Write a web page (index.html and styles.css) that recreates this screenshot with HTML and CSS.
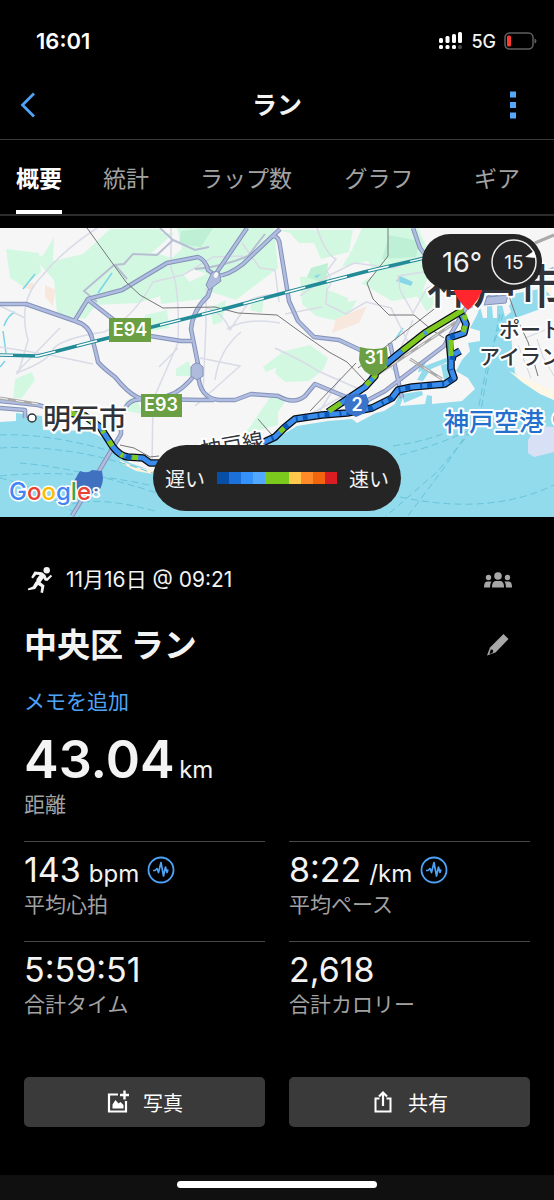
FILE: index.html
```html
<!DOCTYPE html>
<html lang="ja">
<head>
<meta charset="utf-8">
<meta name="viewport" content="width=device-width, initial-scale=1">
<title>ラン</title>
<link rel="stylesheet" href="styles.css">
</head>
<body>
<div class="app">
  <div class="status">
    <span class="clock">16:01</span>
    <div class="status-right">
      <svg class="signal" viewBox="0 0 24 20" aria-hidden="true">
        <g fill="#fff"><rect x="0" y="7" width="4" height="5" rx="1.500"/><rect x="6.500" y="5" width="4" height="7" rx="1.500"/><rect x="13" y="3" width="4" height="9" rx="1.500"/><rect x="19" y="1" width="4" height="11" rx="1.500"/><rect x="0" y="14" width="4" height="4" rx="1.500"/><rect x="6.500" y="14" width="4" height="4" rx="1.500"/><rect x="13" y="14" width="4" height="4" rx="1.500"/></g>
        <rect x="19" y="14" width="4" height="4" rx="1.500" fill="#444"/>
      </svg>
      <span class="network">5G</span>
      <svg class="battery" viewBox="0 0 33 18" aria-hidden="true">
        <rect x="1" y="1" width="28" height="16" rx="4.500" fill="none" stroke="#5d605f" stroke-width="1.500"/>
        <rect x="3" y="3.500" width="4" height="11" rx="1.500" fill="#ff3b30"/>
        <path d="M30.500 6.500q2 .5 2 2.500t-2 2.500z" fill="#5d605f"/>
      </svg>
    </div>
  </div>

  <header class="nav">
    <button class="nav-button" aria-label="戻る"><svg class="back" viewBox="0 0 16 26" aria-hidden="true"><path d="M14 1.500L2.500 13 14 24.500" fill="none" stroke="#4fa3f7" stroke-width="2.800"/></svg></button>
    <h1>ラン</h1>
    <button class="nav-button nav-more" aria-label="メニュー"><svg class="more" viewBox="0 0 6 28" aria-hidden="true"><path d="M0 .5h6v6H0zM0 11h6v6H0zM0 21.500h6v6H0z" fill="#57a8f8"/></svg></button>
  </header>

  <nav class="tabs">
    <a class="tab tab-active" href="#summary" aria-current="page">概要</a>
    <a class="tab" href="#stats">統計</a>
    <a class="tab" href="#laps">ラップ数</a>
    <a class="tab" href="#graph">グラフ</a>
    <a class="tab" href="#gear">ギア</a>
  </nav>

  <section class="map" aria-label="地図">
    <svg class="map-canvas" viewBox="0 0 554 289">
      <rect width="554" height="289" fill="#f6f6f7"/>
      <g fill="#d3f8e2">
        <path d="M6 21l33 4 2 19-17 15-14-9zM44 26l10-17-1 24 30-7 27-25h54l-15 22 23 7 15-14 20-9v17l-24 22 10 12-55 17-42 2-11 14-28-5-3-34-18-20zM115 25l33-22 26 2-20 18-15 9zM160 67l60-27-10 30-49 6zM177 0h97l4 40-42 32-28-9 12-13-25-8-28 6 17-19zM210 80l16-8-4 22-9 3zM252 72l12-3-2 16-12-3zM145 87l22-5 2 18-27 4zM176 141l12-8 7 15h-19zM263 139l17-13v12l-14 6zM15 151l17-7 3 8-13 18h-9zM125 173l12-5 5 18-16-3zM245 206l26-38 7-3v32z"/>
        <path d="M277 2h76l-4 22-28 7-7-16-15 0-9-10zM362 0h56l15 34-12 34-29 5-31-18 14-9-7-13-26 6 10-17zM300 49l28-1v14l20 8-1 25-31-7-14-12zM281 124l29-7 18 13-5 12-14 11-24 1-10-9zM330 78l27-6-8 14-15 2zM417 68l17-13 5 15-12 14zM373 54l29-7-22 20zM275 168l12 3-12 18z"/>
      </g>
      <g fill="#bdf0d4"><path d="M181 3l32-3-12 19-22-3zM311 40l17-5-2 21-19-7zM389 7l30 6-3 16-34 2z"/></g>
      <g fill="#f7e7dc"><path d="M45 57l10 5-2 16-8-9zM336 91l31-13-8 17-27 10zM22 59l11-5v8z"/></g>
      <!-- Sea, harbour basins and reclaimed islands -->
      <path d="M0 194L16 193V185L42 188 43 202 90 203 103 210 115 225 130 235 153 243 230 236 258 226 275 211 297 198 328 193 352 191 357 195 376 185 384 183 395 176 398 168 403 170 400 178 425 176 427 167 432 168 432 176 462 173 475 161 468 150 456 143 462 132 470 123 468 115 480 113 480 103 470 100 477 87 480 79 510 77 513 66 545 60 554 62V289H0z" fill="#92dbec"/>
      <g fill="#f6f6f7">
        <path d="M510 92L554 76V172L540 165 515 145 512 118zM480 79l3 11 4 0 0-12 5 0 1 12 4 0 0-14 5 0 3 13 6-5-3-10zM541 74l13-4v20l-12 3z"/>
      </g>
      <g fill="#92dbec"><path d="M417 152l8-14 21-8 4 3-19 8-8 12zM421 133l5 0-3 10-5 1zM404 175l-2-9 20-3 1 4zM436 160l7-2 1 3zM441 137l8-2 1 14-6 3z"/></g>
      <path d="M509 143l13 6 32 14v9l-14-6-18-12zM544 60l10-4v16z" fill="#fff7e5"/>
      <path d="M120 232l15 7 18 3v4l-17-3-15-8z" fill="#fff2df"/>
      <path d="M525 110l20-8M518 117l13 33M537 111l6 18 11 19" fill="none" stroke="#d3d5da"/>
      <path d="M554 199l-17-1-9 14v13l6 4 20-5z" fill="#d8e0f5"/>
      <path d="M23 61l12-15M4 98q4-11 11-14M3 103l3 22M0 139l5-6M98 65l14-20M395 112l8-12" fill="none" stroke="#79d4e8" stroke-width="1.500"/>
      <path d="M314 48l7-2-4 4zM400 48l13 6-2 4-15-5z" fill="#87d6e9"/>

      <!-- Ferry lines -->
      <g fill="none" stroke="#69c3da" stroke-width="1" stroke-dasharray="7 4">
        <path d="M0 207q60-3 155 30M0 220q75-4 155 26M0 248q75-8 153 10M20 235q60 5 140 31M72 276q30-8 86 8M0 250q40 9 80 39"/>
        <path d="M500 86l-12 56-9 52-42 50-52 45M503 86l-17 56-10 50-32 48-37 49M393 218q35-5 59-16M400 227q35-9 68-24M400 269q90 19 154-12"/>
      </g>

      <!-- Minor roads -->
      <g fill="none" stroke="#d9dbe6" stroke-width="1.500">
        <path d="M97 0q-35 23-55 48-25 25-14 64-10 36-11 34M25 90L0 78M16 145q34-12 38-25 10-10 50-16 28-12 49-50l30-7 30-18 30-1M171 0v40q9 20 7 75l-25 57-1 65M0 119l50 8 43 9M206 80q16 3 24 22l20-30q20-8 30-4M227 101q20-12 53-6M206 60v35l-3 70M215 152q4-30 26-48M200 130l40 8-45 40M178 120l-19 19M60 100l-44 45"/>
        <path d="M242 15l18 25 15 2 4 32M317 0q9 27 19 31l-9 12q7 13 0 18l-1 15 20 10 20-12 25 6 19 38-6 11M300 68l28-20 26-13 40 5 34-14M285 86l37-7M400 62l13 23 14-25 40-14M400 62l-2-14 32-5M275 120q28 13 43 23l41 18M413 92l-12 28M340 150l-20 33M300 192l41-23 7 9M383 130l20 23"/>
      </g>
      <g fill="none" stroke="#b9bfd3" stroke-width="2"><path d="M160 0l13 12-16 15-24-1-9 10-10 1-30 26 13 11M173 12l22 10 14-3M195 41q27-2 53-13l17-22M115 37l12 14"/></g>

      <!-- Main roads: edge stroke under a lighter centre -->
      <g fill="none" stroke-linejoin="round">
        <path stroke="#8392b9" stroke-width="4.500" d="M0 76h26l49 17q14 4 17 17 4 14 6 24 5 6 17 15 12 15 22 20 8 4 17 2l46 1h14M75 92l13-21 34-9 45-27 31-6q8 3 10 13l8 6q12 0 27-12l37-35M87 71l27 21 30 15 37 6h11M273 8q6 0 7 10l9 55 9 20 16 16 25 3 34 16 18 9M247 0l-32 47-7 21q-15 14-17 33l7 35-1 8q-15 20-30 24l-32 4q-15 4-14 34l-22 37-27 45M198 145q1 25 21 27h16l16-6 27 2q16 9 27 0l10-12 31 13 10 8M0 173l38 4 37 10M0 180l25 2 0 8M413 0l7 20 13 17M353 180l32-17 9-7 50-38 22-38 30-14 58-25M369 155l12-28M390 115l12 55"/>
        <path stroke="#b1bde0" stroke-width="2.500" d="M0 76h26l49 17q14 4 17 17 4 14 6 24 5 6 17 15 12 15 22 20 8 4 17 2l46 1h14M75 92l13-21 34-9 45-27 31-6q8 3 10 13l8 6q12 0 27-12l37-35M87 71l27 21 30 15 37 6h11M273 8q6 0 7 10l9 55 9 20 16 16 25 3 34 16 18 9M247 0l-32 47-7 21q-15 14-17 33l7 35-1 8q-15 20-30 24l-32 4q-15 4-14 34l-22 37-27 45M198 145q1 25 21 27h16l16-6 27 2q16 9 27 0l10-12 31 13 10 8M0 173l38 4 37 10M0 180l25 2 0 8M413 0l7 20 13 17M353 180l32-17 9-7 50-38 22-38 30-14 58-25M369 155l12-28M390 115l12 55"/>
      </g>
      <path d="M191 139q5-8 12 0l0 9-6 4-6-4zM212 44l7 0 2 9-12 9-3-5z" fill="#aebbdc" stroke="#8392b9"/>
      <ellipse cx="216" cy="47" rx="2" ry="3" fill="#f6f6f7" transform="rotate(20 216 47)"/>
      <path d="M487 69l21-2-2 8-22 2z" fill="#b1bde0" stroke="#8392b9"/>

      <!-- Railways -->
      <g fill="none" stroke="#777" stroke-width="1"><path d="M87 0l39 54 14 13 23 13 52-1 23 6 39 2 29 21 23 16 18 10 18 19M388 0v28l-21 27 6 16 16 16h25l18 15 12 8M120 217l14 3 16 9 9-1M258 191l14 16M508 65l9 26 11 23 10 34M310 183l46-48M358 140l80-62"/></g>
      <g fill="none" stroke="#aaa" stroke-width="3"><path d="M378 146l78-52M410 131l32 20M535 15l19-8M0 170l38 6"/></g>
      <g fill="none" stroke="#eee" stroke-width="1" stroke-dasharray="8 8"><path d="M378 146l78-52M410 131l32 20M0 170l38 6"/></g>
      <path d="M0 127l38 1 66-17 116-29 56-15 88-23 78-18" fill="none" stroke="#218b98" stroke-width="3.500"/>
      <path d="M0 127l38 1 66-17 116-29 56-15 88-23 78-18" fill="none" stroke="#fff" stroke-width="1.500" stroke-dasharray="21 22" stroke-dashoffset="8"/>

      <!-- Highway shields -->
      <g class="shield-text">
        <rect x="109" y="90" width="42" height="24" fill="#6aa043"/><text x="130" y="108">E94</text>
        <rect x="141" y="166" width="41" height="23" fill="#6aa043"/><text x="161" y="183">E93</text>
      </g>
      <path d="M80 243q8 3 12-1l10 1 1 7q-1 16-14 18-12-1-15-15z" fill="#4070c0"/>

      <!-- Route with pace colours -->
      <g fill="none" stroke-linejoin="round">
        <g stroke="#080b10" stroke-width="7.500">
          <path d="M70 185l15 3 15 11 13 20q7 9 15 10l15 1 7 5h24M258 217l17-8 9-9 11-9 27-4 25-2 25-5 20-10 6-8 14-3 33-3 9-6-3-9v-9l-2-22 15-5 2-9-4-9M452 132l1-5 7-4M463 82l-38 23-23 18-27 22 0 3-10 11-37 25"/>
        </g>
        <g stroke="#398ceb" stroke-width="5">
          <path d="M70 185l15 3 15 11 13 20q7 9 15 10l15 1 7 5h24M258 217l17-8 9-9 11-9 27-4 25-2 25-5 20-10 6-8 14-3 33-3 9-6-3-9v-9l-2-22 15-5 2-9-4-9M452 132l1-5 7-4M402 123l-27 22 0 3-10 11-37 25"/>
        </g>
        <path d="M258 217l17-8M284 200l11-9 27-4 25-2 25-5 20-10 6-8 14-3 33-3 9-6-3-9M450 109l11-3M452 132l1-5 7-4" stroke="#0c58b6" stroke-width="5" stroke-dasharray="5 10 2 5"/>
        <path d="M463 82l-38 23-23 18M386 137l-11 8 0 3-2 2M370 153l-4 4M341 175l-12 8M280 204l4-4M70 185l15 3M451 112l0 16" stroke="#7ec820" stroke-width="5"/>
        <path d="M89 191l11 8 13 20q7 9 15 10l15 1" stroke="#7ec820" stroke-width="5" stroke-dasharray="6 12 3 9"/>
        <path d="M126 228l5 2" stroke="#0c58b6" stroke-width="5"/>
        <path d="M427 104l-3 2" stroke="#4d9ad6" stroke-width="5"/>
        <path d="M464 87l2 5M465 98l-2 6" stroke="#7ec820" stroke-width="5"/>
      </g>
      <path d="M360 119q14 4 27 0l1 13q-3 12-14 16-12-3-15-16z" fill="#6aa043"/>
      <path d="M347 166q7 2 9-1 4 3 10 1l3 8-4 11-9 4-10-5-2-9z" fill="#3974ca"/>

      <!-- Place names -->
      <g class="place">
        <text class="place-city" x="43" y="201">明石市</text>
        <text class="place-major" x="427" y="75">神戸市</text>
        <text class="place-area" x="499" y="109">ポート</text>
        <text class="place-area" x="479" y="136">アイランド</text>
        <text class="place-rail" transform="rotate(-10 202 228)" x="202" y="230">神戸線</text>
        <text class="place-airport" x="444" y="203">神戸空港</text>
      </g>
      <circle cx="32" cy="190" r="4" fill="#fff" stroke="#333" stroke-width="1.500"/>
      <circle cx="561" cy="191" r="9" fill="#9aa7c8" stroke="#fff" stroke-width="2"/>
      <path d="M452 57h32q-4 15-16 25-12-10-16-25z" fill="#ff272d"/>
      <text class="google" x="9" y="272"><tspan fill="#4285f4">G</tspan><tspan fill="#ea4335">o</tspan><tspan fill="#fbbc05">o</tspan><tspan fill="#4285f4">g</tspan><tspan fill="#34a853">l</tspan><tspan fill="#ea4335">e</tspan></text>
      <g class="shield-text"><text x="374" y="136">31</text><text x="357" y="183">2</text><text class="shield-small" x="96" y="270">8</text></g>
    </svg>

    <div class="weather">
      <span class="temp">16°</span>
      <span class="wind"><svg class="dial" viewBox="0 0 48 48" aria-hidden="true"><circle cx="24" cy="24" r="22" fill="none" stroke="#eee" stroke-width="1.500"/><path d="M44 13l-9 6 11 1z" fill="#fff"/></svg><span class="wind-value">15</span></span>
    </div>
    <div class="legend">
      <span>遅い</span>
      <span class="scale"><i class="c1"></i><i class="c2"></i><i class="c3"></i><i class="c4"></i><i class="c5"></i><i class="c5"></i><i class="c6"></i><i class="c7"></i><i class="c8"></i><i class="c9"></i></span>
      <span>速い</span>
    </div>
  </section>

  <main class="summary" id="summary">
    <div class="row row-date">
      <svg class="runner" viewBox="0 0 26 28" aria-hidden="true">
        <g fill="#f3f3f3"><circle cx="19.700" cy="4.300" r="3.200"/>
        <path d="M7.500 5.500L15 6.200l3.200 2.600 1.600 3.400 4-3.400 1.300 1.400-4.800 4.800-2.600-.5-1.200-2.200-3 4 4 3.200-1.500 7.500-2.500-.5.800-5.500-5.500-3.500.8-4.500 3-4-3.500-.3-3.200 3.800-1.700-1.200z"/>
        <path d="M8.600 15.500l2.800 3-3.200 4.400-7 1.400-.4-1.600 5-2.200z"/></g>
      </svg>
      <span class="date">11月16日 @ 09:21</span>
      <button class="icon-button" aria-label="公開設定"><svg class="people" viewBox="0 0 28 16" aria-hidden="true"><g fill="#a7a7a7"><circle cx="14" cy="4" r="3.800"/><circle cx="4.500" cy="5.500" r="2.700"/><circle cx="23.500" cy="5.500" r="2.700"/><path d="M8 15.500q0-6.500 3.500-6.500h5q3.500 0 3.500 6.500zM0 15.500q0-6 3-6h4.500q-1.500 2-1.500 6zM28 15.500q0-6-3-6h-4.500q1.500 2 1.500 6z"/></g></svg></button>
    </div>
    <div class="row row-title">
      <h2>中央区 ラン</h2>
      <button class="icon-button" aria-label="編集"><svg class="pencil" viewBox="0 0 22 22" aria-hidden="true"><path d="M16.500 0l5 5L8.500 18.500 0 21.500l3-8z" fill="#a7a7a7"/><path d="M3.700 15.500l2 .300.600 2-1.300 1.400-2.500.900z" fill="#000"/></svg></button>
    </div>
    <a class="memo" href="#memo">メモを追加</a>
    <div class="distance"><span class="distance-value">43.04</span> <span class="unit">km</span></div>
    <div class="label">距離</div>

    <div class="stats">
      <div class="stat">
        <div class="value">143 <span class="unit">bpm</span><svg class="pulse" viewBox="0 0 28 28" aria-hidden="true"><g fill="none" stroke="#4fa3f7"><circle cx="14" cy="14" r="12.500" stroke-width="1.800"/><path d="M6 14.500h2l2-2 1.500 4 2.500-10 2.500 13.500 2-9 1.500 5.500 1-3" stroke-width="1.700" stroke-linejoin="round"/></g></svg></div>
        <div class="label">平均心拍</div>
      </div>
      <div class="stat">
        <div class="value">8:22 <span class="unit">/km</span><svg class="pulse" viewBox="0 0 28 28" aria-hidden="true"><g fill="none" stroke="#4fa3f7"><circle cx="14" cy="14" r="12.500" stroke-width="1.800"/><path d="M6 14.500h2l2-2 1.500 4 2.500-10 2.500 13.500 2-9 1.500 5.500 1-3" stroke-width="1.700" stroke-linejoin="round"/></g></svg></div>
        <div class="label">平均ペース</div>
      </div>
      <div class="stat"><div class="value">5:59:51</div><div class="label">合計タイム</div></div>
      <div class="stat"><div class="value">2,618</div><div class="label">合計カロリー</div></div>
    </div>

    <div class="actions">
      <button class="action"><svg class="action-icon" viewBox="0 0 24 24" aria-hidden="true"><path d="M12 4.500H3v17h17V11" fill="none" stroke="#fff" stroke-width="2.200"/><path d="M18.500 .5v9M14 5h9" stroke="#fff" stroke-width="2.400"/><path d="M6.500 18.500v-4l3-4.500 3 3.500 2-1.500 3 3v3.500z" fill="#fff"/></svg>写真</button>
      <button class="action"><svg class="action-icon" viewBox="0 0 24 24" aria-hidden="true"><path d="M8.500 8.500H4.500v13h15v-13h-4" fill="none" stroke="#fff" stroke-width="2"/><path d="M12 16V3M8 6.500l4-4 4 4" fill="none" stroke="#fff" stroke-width="2.200"/></svg>共有</button>
    </div>
  </main>

  <footer class="home"><span class="home-indicator"></span></footer>
</div>
</body>
</html>
```
FILE: styles.css
```css
* { box-sizing: border-box; }

body {
  margin: 0;
  background: #000;
  color: #f3f3f3;
  font-family: Inter, "Noto Sans CJK JP", sans-serif;
}

button {
  border: 0;
  padding: 0;
  background: none;
  color: inherit;
  font: inherit;
}

a { text-decoration: none; }

svg { display: block; flex: none; }

.app {
  display: flex;
  flex-direction: column;
  min-height: 100vh;
}

.status {
  display: flex;
  align-items: center;
  justify-content: space-between;
  height: 82px;
  padding: 0 17px 0 36px;
}

.clock {
  color: #fff;
  font-size: 22px;
  font-weight: 600;
}

.status-right {
  display: flex;
  align-items: center;
  gap: 8px;
}

.signal { width: 24px; height: 20px; }
.network { font-size: 18px; font-weight: 500; }
.battery { width: 33px; height: 18px; }

.nav {
  display: grid;
  grid-template-columns: 1fr auto 1fr;
  align-items: center;
  height: 58px;
  padding: 0 38px 12px 20px;
  border-bottom: 1px solid #3a3a3a;
}

.nav-button { justify-self: start; }
.nav-more { justify-self: end; }

.nav h1 {
  margin: 0 0 0 18px;
  font-size: 25px;
  font-weight: 700;
  line-height: 36px;
}

.back { width: 16px; height: 26px; }
.more { width: 6px; height: 28px; }

.tabs {
  display: grid;
  grid-template-columns: 78fr 96fr 144fr 122fr 114fr;
  justify-items: center;
  height: 76px;
  border-bottom: 2px solid #2c2c2c;
}

.tab {
  display: flex;
  align-items: center;
  padding-top: 4px;
  border-bottom: 4px solid transparent;
  color: #a2a2a2;
  font-size: 23px;
  white-space: nowrap;
}

.tab-active {
  border-color: #fff;
  color: #fff;
  font-weight: 700;
}

.map {
  position: relative;
  margin-top: 12px;
  overflow: hidden;
}

.map-canvas { width: 100%; height: auto; }

.shield-text {
  fill: #fff;
  font-size: 18px;
  font-weight: 600;
  text-anchor: middle;
}

.shield-small { font-size: 15px; }

.place {
  fill: #30343a;
  stroke: #fff;
  stroke-width: 4px;
  stroke-linejoin: round;
  paint-order: stroke;
}

.place-city { font-size: 28px; font-weight: 500; }
.place-major { font-size: 46px; font-weight: 500; }
.place-area { font-size: 21px; font-weight: 500; }
.place-rail { font-size: 21px; }
.place-airport { fill: #2370cd; font-size: 25px; font-weight: 500; }

.google {
  font-size: 24px;
  font-weight: 500;
  stroke: #fff;
  stroke-width: 3px;
  paint-order: stroke;
}

.weather {
  position: absolute;
  top: 6px;
  right: 12px;
  display: flex;
  align-items: center;
  gap: 8px;
  height: 56px;
  padding: 0 4px 0 20px;
  border-radius: 28px;
  background: #252525;
}

.temp { font-size: 27px; }

.wind {
  display: grid;
  place-items: center;
}

.dial, .wind-value { grid-area: 1 / 1; }
.dial { width: 48px; height: 48px; }
.wind-value { font-size: 19px; }

.legend {
  position: absolute;
  bottom: 6px;
  left: 50%;
  display: flex;
  align-items: center;
  gap: 12px;
  height: 66px;
  padding: 0 12px;
  border-radius: 33px;
  background: #252525;
  font-size: 20px;
  white-space: nowrap;
  transform: translateX(-50%);
}

.scale { display: flex; }
.scale i { width: 12px; height: 12px; }
.c1 { background: #074ea6; }
.c2 { background: #1b70d9; }
.c3 { background: #3592fb; }
.c4 { background: #52a8ff; }
.c5 { background: #7bc91d; }
.c6 { background: #ffc74b; }
.c7 { background: #ff8a28; }
.c8 { background: #f0650e; }
.c9 { background: #da1d23; }

.summary { padding: 46px 24px 48px; }

.row {
  display: flex;
  align-items: center;
}

.row-date { height: 34px; padding-left: 3px; }
.runner { width: 26px; height: 28px; }

.date {
  margin-left: 13px;
  font-size: 21px;
  line-height: 28px;
}

.icon-button {
  display: grid;
  place-items: center;
  width: 28px;
  height: 28px;
  margin: 0 18px 0 auto;
}

.people { width: 28px; height: 16px; }
.pencil { width: 22px; height: 22px; }

.row-title { height: 48px; margin-top: 24px; }

h2 {
  margin: 0;
  font-size: 33px;
  font-weight: 700;
  line-height: 48px;
}

.memo {
  display: block;
  margin-top: 17px;
  color: #4fa3f7;
  font-size: 21px;
  line-height: 32px;
}

.distance {
  height: 72px;
  line-height: 84px;
}

.distance-value {
  font-size: 52px;
  font-weight: 600;
}

.unit { font-size: 24px; }

.label {
  color: #a2a2a2;
  font-size: 21px;
  line-height: 30px;
}

.stats {
  display: grid;
  grid-template-columns: 1fr 1fr;
  gap: 0 24px;
  margin-top: 21px;
}

.stat {
  height: 100px;
  border-top: 1px solid #484848;
}

.value {
  display: flex;
  align-items: baseline;
  gap: 8px;
  height: 48px;
  font-size: 34px;
  line-height: 56px;
}

.pulse {
  align-self: center;
  width: 28px;
  height: 28px;
  margin-top: 8px;
}

.actions {
  display: grid;
  grid-template-columns: 1fr 1fr;
  gap: 24px;
  margin-top: 36px;
}

.action {
  display: flex;
  align-items: center;
  justify-content: center;
  gap: 13px;
  height: 50px;
  border-radius: 5px;
  background: #3a3a3a;
  color: #fff;
  font-size: 20px;
}

.action-icon { width: 24px; height: 24px; }

.home {
  display: flex;
  justify-content: center;
  height: 25px;
  margin-top: auto;
  padding-top: 6px;
  background: #101010;
}

.home-indicator {
  width: 36%;
  height: 7px;
  border-radius: 4px;
  background: #fff;
}
```
